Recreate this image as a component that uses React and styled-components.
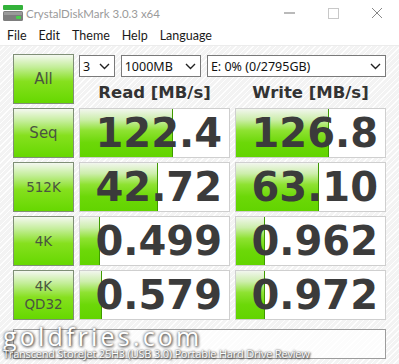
import React from 'react'
import styled, { createGlobalStyle } from 'styled-components'

const GlobalStyle = createGlobalStyle`
  html, body {
    margin: 0;
    padding: 0;
    background: #ffffff;
  }
  body {
    font-family: Lato, "Noto Sans", sans-serif;
  }
`

const Window = styled.div`
  position: relative;
  width: 399px;
  height: 364px;
  overflow: hidden;
  background: #ffffff;
`

const TitleBar = styled.div`
  height: 26px;
  display: flex;
  align-items: center;
  padding-left: 3px;
`

const Title = styled.span`
  margin-left: 3px;
  font-size: 11.5px;
  color: #9a9a9a;
  flex: 1;
`

const Controls = styled.div`
  display: flex;
  align-items: center;
`

const ControlButton = styled.div`
  width: 44px;
  height: 26px;
  display: flex;
  align-items: center;
  justify-content: center;
`

const MenuBar = styled.div`
  height: 18px;
  display: flex;
  align-items: center;
  gap: 12px;
  padding-left: 7px;
  border-bottom: 1px solid #ececec;
  padding-bottom: 1px;
`

const MenuItem = styled.span`
  font-size: 12.5px;
  color: #1a1a1a;
`

const Body = styled.div`
  height: 319px;
  background-color: #f3f3f3;
  background-image: repeating-linear-gradient(
    -45deg,
    rgba(255, 255, 255, 0.9) 0px,
    rgba(255, 255, 255, 0.9) 1px,
    transparent 1px,
    transparent 4px
  );
  padding: 8px 0 0 13px;
  box-sizing: border-box;
`

const Grid = styled.div`
  display: grid;
  grid-template-columns: 61px 151px 151px;
  grid-auto-rows: 50px;
  column-gap: 5px;
  row-gap: 4px;
`

const GreenButton = styled.div`
  box-sizing: border-box;
  border: 1px solid #7f8f76;
  background: linear-gradient(
    to bottom,
    #f4f8f0 0%,
    #c4ee9a 25%,
    #86e01e 55%,
    #66d800 100%
  );
  display: flex;
  flex-direction: column;
  align-items: center;
  justify-content: center;
  font-family: "DejaVu Sans", Verdana, sans-serif;
  font-size: ${(p) => (p.$small ? '13.5px' : '15px')};
  line-height: 18px;
  color: #4a5540;
`

const TopArea = styled.div`
  grid-column: 2 / 4;
  display: flex;
  flex-direction: column;
`

const SelectRow = styled.div`
  display: flex;
  gap: 6px;
  height: 22px;
  margin-top: 1px;
`

const Select = styled.div`
  box-sizing: border-box;
  width: ${(p) => p.$w}px;
  height: 22px;
  border: 1px solid #7a7a7a;
  background: #ffffff;
  display: flex;
  align-items: center;
  justify-content: space-between;
  padding: 0 4px 0 3px;
  font-family: "Noto Sans", sans-serif;
  font-size: 12.5px;
  color: #111;
`

const Headers = styled.div`
  display: grid;
  grid-template-columns: 151px 151px;
  column-gap: 5px;
  flex: 1;
  align-items: center;
`

const Header = styled.div`
  text-align: center;
  font-family: "DejaVu Sans", Verdana, sans-serif;
  font-weight: bold;
  font-size: 16.5px;
  color: #333333;
  padding-top: 3px;
`

const Cell = styled.div`
  position: relative;
  box-sizing: border-box;
  border: 1px solid #cfcfcf;
  background: #ffffff;
  overflow: hidden;
`

const Bar = styled.div`
  position: absolute;
  left: 0;
  top: 0;
  bottom: 0;
  background: linear-gradient(
    to bottom,
    #f2f6ee 0%,
    #cdeeac 22%,
    #8ee231 45%,
    #6cd808 70%,
    #62d400 100%
  );
  border-right: 1px solid #3f9a00;
`

const Value = styled.div`
  position: relative;
  height: 100%;
  display: flex;
  align-items: center;
  justify-content: flex-end;
  padding-right: 7px;
  font-family: "DejaVu Sans", Verdana, sans-serif;
  font-weight: bold;
  font-size: 40px;
  color: #3b3b3b;
`

const Comment = styled.div`
  margin-top: 9px;
  width: 373px;
  height: 30px;
  box-sizing: border-box;
  border: 1px solid #9c9c9c;
  background: rgba(255, 255, 255, 0.75);
`

const Watermark = styled.div`
  position: absolute;
  left: 3px;
  top: 325px;
  color: #ffffff;
  font-family: "Open Sans", "Noto Sans", sans-serif;
  pointer-events: none;
`

const MarkSite = styled.div`
  font-size: 25px;
  line-height: 22px;
  letter-spacing: 3.2px;
  text-shadow: 0 0 3px #555, 1px 1px 3px #444;
`

const MarkTitle = styled.div`
  margin-top: 1px;
  font-size: 11px;
  line-height: 12px;
  letter-spacing: -0.2px;
  text-shadow: 0 0 2px #333, 1px 1px 2px #333;
`

const Chevron = () => (
  <svg width="11" height="7" viewBox="0 0 11 7">
    <path d="M1 1 L5.5 5.5 L10 1" fill="none" stroke="#222" strokeWidth="1.4" />
  </svg>
)

const AppIcon = () => (
  <svg width="20" height="16" viewBox="0 0 20 16">
    <rect x="0" y="0" width="20" height="5" rx="1" fill="#33b23a" />
    <rect x="0" y="6" width="20" height="10" rx="1.5" fill="#7d7d7d" />
    <rect x="1" y="7" width="18" height="3" fill="#9a9a9a" />
    <rect x="13" y="11" width="5" height="3" rx="1" fill="#49d04c" />
  </svg>
)

const rows = [
  { label: ['Seq'], read: '122.4', readBar: 92, write: '126.8', writeBar: 92 },
  { label: ['512K'], read: '42.72', readBar: 77, write: '63.10', writeBar: 82, small: true },
  { label: ['4K'], read: '0.499', readBar: 19, write: '0.962', writeBar: 28, small: true },
  { label: ['4K', 'QD32'], read: '0.579', readBar: 21, write: '0.972', writeBar: 28, small: true },
]

const ResultCell = ({ value, bar }) => (
  <Cell>
    <Bar style={{ width: bar }} />
    <Value>{value}</Value>
  </Cell>
)

export default function App() {
  return (
    <Window>
      <GlobalStyle />
      <TitleBar>
        <AppIcon />
        <Title>CrystalDiskMark 3.0.3 x64</Title>
        <Controls>
          <ControlButton>
            <svg width="11" height="2"><rect width="11" height="1" y="0.5" fill="#777" /></svg>
          </ControlButton>
          <ControlButton>
            <svg width="11" height="11"><rect x="0.5" y="0.5" width="10" height="10" fill="none" stroke="#c8c8c8" /></svg>
          </ControlButton>
          <ControlButton>
            <svg width="12" height="12"><path d="M1 1 L11 11 M11 1 L1 11" stroke="#888" strokeWidth="1" /></svg>
          </ControlButton>
        </Controls>
      </TitleBar>
      <MenuBar>
        <MenuItem>File</MenuItem>
        <MenuItem>Edit</MenuItem>
        <MenuItem>Theme</MenuItem>
        <MenuItem>Help</MenuItem>
        <MenuItem>Language</MenuItem>
      </MenuBar>
      <Body>
        <Grid>
          <GreenButton>All</GreenButton>
          <TopArea>
            <SelectRow>
              <Select $w={36}>3<Chevron /></Select>
              <Select $w={81}>1000MB<Chevron /></Select>
              <Select $w={181}>E: 0% (0/2795GB)<Chevron /></Select>
            </SelectRow>
            <Headers>
              <Header>Read [MB/s]</Header>
              <Header>Write [MB/s]</Header>
            </Headers>
          </TopArea>
          {rows.map((r) => (
            <React.Fragment key={r.label.join('')}>
              <GreenButton $small={r.small}>
                {r.label.map((l) => (
                  <span key={l}>{l}</span>
                ))}
              </GreenButton>
              <ResultCell value={r.read} bar={r.readBar} />
              <ResultCell value={r.write} bar={r.writeBar} />
            </React.Fragment>
          ))}
        </Grid>
        <Comment />
      </Body>
      <Watermark>
        <MarkSite>goldfries.com</MarkSite>
        <MarkTitle>Transcend StoreJet 25H3 (USB 3.0) Portable Hard Drive Review</MarkTitle>
      </Watermark>
    </Window>
  )
}
